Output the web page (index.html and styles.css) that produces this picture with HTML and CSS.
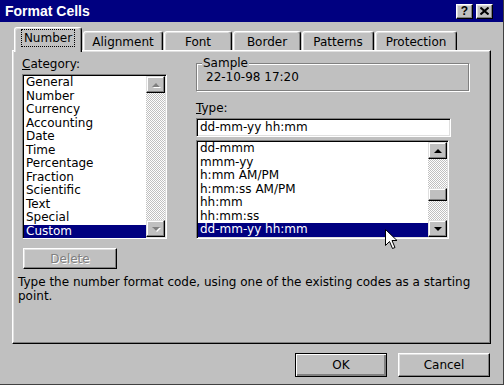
FILE: index.html
```html
<!DOCTYPE html>
<html lang="en">
<head>
  <meta charset="UTF-8">
  <title>Format Cells</title>
  <link rel="stylesheet" href="styles.css">
</head>
<body>

  <div class="window">
    <div class="titlebar">
      <span class="title">Format Cells</span>
      <div class="title-buttons">
        <span class="tbtn">?</span>
        <span class="tbtn">
          <svg width="9" height="8" viewBox="0 0 9 8"><path d="M0.5 0.5 L8.5 7.5 M8.5 0.5 L0.5 7.5" stroke="#000" stroke-width="2"/></svg>
        </span>
      </div>
    </div>

    <div class="dialog">
      <div class="tabs">
        <div class="tab active" style="width: 68px"><span class="focus">Number</span></div>
        <div class="tab" style="width: 80px">Alignment</div>
        <div class="tab" style="width: 68px">Font</div>
        <div class="tab" style="width: 68px">Border</div>
        <div class="tab" style="width: 72px">Patterns</div>
        <div class="tab" style="width: 82px">Protection</div>
      </div>

      <div class="panel">
        <div class="columns">
          <div class="col-left">
            <div class="label"><u>C</u>ategory:</div>
            <div class="listbox category">
              <ul class="items">
                <li>General</li>
                <li>Number</li>
                <li>Currency</li>
                <li>Accounting</li>
                <li>Date</li>
                <li>Time</li>
                <li>Percentage</li>
                <li>Fraction</li>
                <li>Scientific</li>
                <li>Text</li>
                <li>Special</li>
                <li class="selected">Custom</li>
              </ul>
              <div class="scrollbar disabled">
                <div class="sb-btn"><span class="arrow up"></span></div>
                <div class="sb-track grow"></div>
                <div class="sb-btn"><span class="arrow down"></span></div>
              </div>
            </div>
            <button class="btn delete" disabled>Delete</button>
          </div>

          <div class="col-right">
            <fieldset class="sample">
              <legend>Sample</legend>
              <div class="sample-value">22-10-98 17:20</div>
            </fieldset>
            <div class="label type-label"><u>T</u>ype:</div>
            <div class="textbox">dd-mm-yy hh:mm</div>
            <div class="listbox types">
              <ul class="items">
                <li>dd-mmm</li>
                <li>mmm-yy</li>
                <li>h:mm AM/PM</li>
                <li>h:mm:ss AM/PM</li>
                <li>hh:mm</li>
                <li>hh:mm:ss</li>
                <li class="selected">dd-mm-yy hh:mm</li>
              </ul>
              <div class="scrollbar">
                <div class="sb-btn"><span class="arrow up"></span></div>
                <div class="sb-track above"></div>
                <div class="sb-thumb"></div>
                <div class="sb-track grow"></div>
                <div class="sb-btn"><span class="arrow down"></span></div>
              </div>
            </div>
          </div>
        </div>

        <p class="hint">Type the number format code, using one of the existing codes as a starting point.</p>
      </div>

      <div class="actions">
        <button class="btn default">OK</button>
        <button class="btn">Cancel</button>
      </div>
    </div>

    <svg class="cursor" width="13" height="21" viewBox="0 0 13 21">
      <path d="M0.5 0.5 L0.5 16.5 L4.5 12.5 L7.5 19.5 L10 18.5 L7 11.5 L12 11.5 Z" fill="#fff" stroke="#000" stroke-width="1"/>
    </svg>
  </div>

</body>
</html>
```

FILE: styles.css
```css
* {
  box-sizing: border-box;
}

body {
  margin: 0;
  background-color: #c0c0c0;
  font-family: "DejaVu Sans", Verdana, sans-serif;
  font-size: 12px;
  color: #000;
}

.window {
  position: relative;
  width: 504px;
  height: 385px;
  background-color: #c0c0c0;
  border-right: 1px solid #404040;
  border-bottom: 1px solid #404040;
  overflow: hidden;
}

.titlebar {
  height: 22px;
  background-color: #000080;
  color: #fff;
  display: flex;
  align-items: center;
  justify-content: space-between;
  padding: 0 10px 0 5px;
}

.title {
  font-family: "Liberation Sans", Arial, sans-serif;
  font-weight: bold;
  font-size: 14px;
}

.title-buttons {
  display: flex;
  gap: 3px;
}

.tbtn {
  width: 17px;
  height: 15px;
  display: flex;
  align-items: center;
  justify-content: center;
  background-color: #c0c0c0;
  border: 1px solid;
  border-color: #fff #000 #000 #fff;
  box-shadow: inset -1px -1px #808080, inset 1px 1px #dfdfdf;
  color: #000;
  font-family: "Liberation Sans", Arial, sans-serif;
  font-weight: bold;
  font-size: 12px;
  line-height: 12px;
}

.dialog {
  padding: 5px 12px 0 12px;
}

/* tabs */
.tabs {
  position: relative;
  z-index: 1;
  display: flex;
  align-items: flex-end;
  height: 23px;
  padding-left: 2px;
}

.tab {
  height: 19px;
  margin-left: 1px;
  display: flex;
  align-items: center;
  justify-content: center;
  background-color: #c0c0c0;
  border-top: 1px solid #fff;
  border-left: 1px solid #fff;
  border-right: 1px solid #000;
  border-radius: 3px 3px 0 0;
  box-shadow: inset -1px 0 #808080, inset 1px 1px #dfdfdf;
  padding-top: 1px;
}

.tab.active {
  height: 25px;
  margin-left: 0;
  margin-bottom: -2px;
  padding-top: 0;
  padding-bottom: 4px;
}

.focus {
  outline: 1px dotted #000;
  outline-offset: 1px;
  padding: 0 1px;
}

/* panel */
.panel {
  height: 294px;
  border: 1px solid;
  border-color: #fff #000 #000 #fff;
  box-shadow: inset -1px -1px #808080, inset 1px 1px #dfdfdf;
  padding: 6px 9px 0 9px;
}

.columns {
  display: flex;
  gap: 29px;
}

.col-left {
  width: 145px;
  display: flex;
  flex-direction: column;
  align-items: flex-start;
}

.col-right {
  width: 273px;
}

.label {
  height: 17px;
  line-height: 15px;
}

/* sunken controls */
.listbox, .textbox {
  background-color: #fff;
  border: 1px solid;
  border-color: #808080 #fff #fff #808080;
  box-shadow: inset 1px 1px #000, inset -1px -1px #dfdfdf;
  padding: 1px;
}

.listbox {
  display: flex;
}

.category {
  width: 145px;
  height: 165px;
}

.types {
  width: 253px;
  height: 99px;
  margin-top: 3px;
}

.items {
  flex: 1;
  list-style: none;
  margin: 0;
  padding: 0;
}

.items li {
  height: 13.5px;
  line-height: 13.5px;
  padding-left: 2px;
  white-space: nowrap;
}

.items li.selected {
  background-color: #000080;
  color: #fff;
}

.textbox {
  width: 255px;
  height: 19px;
  line-height: 15px;
  padding-left: 3px;
}

/* scrollbars */
.scrollbar {
  width: 19px;
  display: flex;
  flex-direction: column;
}

.sb-btn, .sb-thumb {
  background-color: #c0c0c0;
  border: 1px solid;
  border-color: #dfdfdf #000 #000 #dfdfdf;
  box-shadow: inset -1px -1px #808080, inset 1px 1px #fff;
}

.sb-btn {
  height: 17px;
  display: flex;
  align-items: center;
  justify-content: center;
}

.sb-thumb {
  height: 13px;
}

.sb-track {
  background: repeating-conic-gradient(#c0c0c0 0 25%, #fff 0 50%) 0 0 / 2px 2px;
}

.sb-track.above {
  height: 29px;
}

.sb-track.grow {
  flex: 1;
}

.arrow {
  width: 0;
  height: 0;
  border-left: 4px solid transparent;
  border-right: 4px solid transparent;
}

.arrow.up {
  border-bottom: 4px solid #000;
}

.arrow.down {
  border-top: 4px solid #000;
}

.disabled .arrow.up {
  border-bottom-color: #808080;
  filter: drop-shadow(1px 1px 0 #fff);
}

.disabled .arrow.down {
  border-top-color: #808080;
  filter: drop-shadow(1px 1px 0 #fff);
}

/* sample group */
.sample {
  margin: 0;
  padding: 1px 9px 5px 9px;
  border: 1px solid #808080;
  box-shadow: inset 1px 1px #fff, 1px 1px #fff;
}

.sample legend {
  margin-left: -4px;
  padding: 0 1px;
  line-height: 12px;
  background-color: #c0c0c0;
}

.sample-value {
  line-height: 15px;
}

.type-label {
  margin-top: 10px;
}

/* buttons */
.btn {
  font-family: "DejaVu Sans", Verdana, sans-serif;
  font-size: 12px;
  color: #000;
  background-color: #c0c0c0;
  border: 1px solid;
  border-color: #fff #000 #000 #fff;
  box-shadow: inset -1px -1px #808080, inset 1px 1px #dfdfdf;
  padding: 0;
}

.delete {
  width: 94px;
  height: 21px;
  margin: 9px 0 0 1px;
  color: #808080;
  text-shadow: 1px 1px 0 #fff;
}

.hint {
  width: 470px;
  margin: 6px 0 0 -4px;
  line-height: 14px;
}

.actions {
  display: flex;
  justify-content: flex-end;
  gap: 11px;
  margin-top: 9px;
  padding-right: 1px;
}

.actions .btn {
  width: 92px;
  height: 24px;
}

.btn.default {
  outline: 1px solid #000;
  outline-offset: -1px;
  border-color: #000;
  box-shadow: inset 1px 1px #fff, inset -1px -1px #808080, inset -2px -2px #808080;
}

.cursor {
  position: absolute;
  left: 385px;
  top: 229px;
}
```
